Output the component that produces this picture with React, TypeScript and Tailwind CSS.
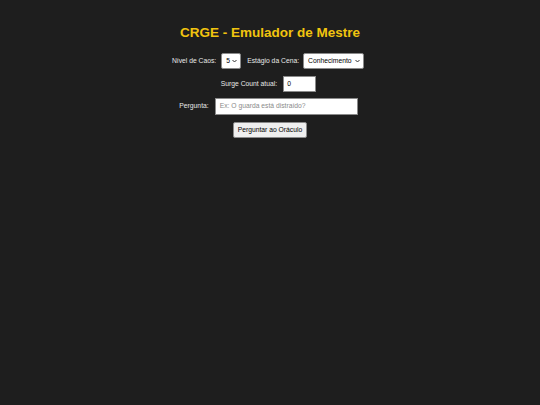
import React from "react";

function Chevron() {
  return (
    <svg width="5" height="4" viewBox="0 0 10 7" className="absolute right-[3px] top-1/2 -translate-y-1/2 pointer-events-none">
      <path d="M1 1.5 L5 5.5 L9 1.5" stroke="#333" strokeWidth="2" fill="none" />
    </svg>
  );
}

export default function App() {
  return (
    <div
      className="min-h-screen w-full bg-[#1e1e1e] text-[#e8e8e8] flex flex-col items-center pt-[24px]"
      style={{ fontFamily: '"Liberation Sans", Arial, sans-serif' }}
    >
      <h1 className="text-[13.5px] font-bold leading-[18px] text-[#f1c40f] m-0">
        CRGE - Emulador de Mestre
      </h1>

      <div className="flex items-center mt-[11px] h-[16px] text-[6.75px] leading-none mr-[4px]">
        <span className="mr-[5px]">Nível de Caos:</span>
        <div className="relative h-[16px] w-[20px] bg-white border border-[#8a8a8a] rounded-[2px] text-black flex items-center pl-[4px] mr-[6px]">
          <span>5</span>
          <Chevron />
        </div>
        <span className="mr-[4px]">Estágio da Cena:</span>
        <div className="relative h-[16px] w-[61px] bg-white border border-[#8a8a8a] rounded-[2px] text-black flex items-center pl-[4px]">
          <span>Conhecimento</span>
          <Chevron />
        </div>
      </div>

      <div className="flex items-center mt-[7px] h-[16px] text-[6.75px] leading-none mr-[3px]">
        <span className="mr-[6px]">Surge Count atual:</span>
        <div className="h-[16px] w-[33px] bg-white border border-[#8a8a8a] text-black flex items-center pl-[3px]">
          0
        </div>
      </div>

      <div className="flex items-center mt-[6px] h-[17px] text-[6.75px] leading-none mr-[3px]">
        <span className="mr-[6px]">Pergunta:</span>
        <div className="h-[17px] w-[143px] bg-white border border-[#8a8a8a] text-[#8a8a8a] flex items-center pl-[4px]">
          Ex: O guarda está distraído?
        </div>
      </div>

      <button className="mt-[7px] h-[16px] px-[4px] bg-[#efefef] border border-[#8a8a8a] rounded-[2px] text-black text-[6.75px] leading-none">
        Perguntar ao Oráculo
      </button>
    </div>
  );
}
